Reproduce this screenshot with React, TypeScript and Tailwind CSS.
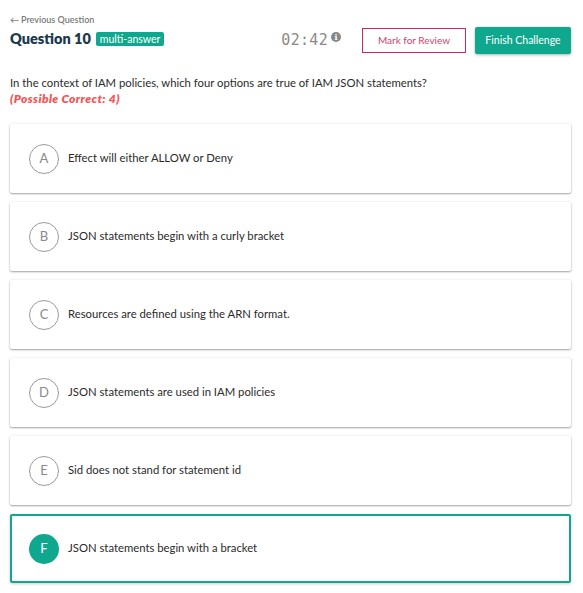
import React, { useState } from 'react';

const options = [
  { id: 'A', text: 'Effect will either ALLOW or Deny' },
  { id: 'B', text: 'JSON statements begin with a curly bracket' },
  { id: 'C', text: 'Resources are defined using the ARN format.' },
  { id: 'D', text: 'JSON statements are used in IAM policies' },
  { id: 'E', text: 'Sid does not stand for statement id' },
  { id: 'F', text: 'JSON statements begin with a bracket' },
];

const App = () => {
  const [selected, setSelected] = useState<string[]>(['F']);

  const toggle = (id: string) =>
    setSelected((s) => (s.includes(id) ? s.filter((x) => x !== id) : [...s, id]));

  return (
    <div className="w-[583px] h-[593px] bg-white pl-[10px] pr-[12px] pt-[14px] font-['Lato',sans-serif] text-[#2b2b2b]">
      {/* header */}
      <div className="flex items-start justify-between">
        <div>
          <div className="flex items-center gap-[2px] text-[9px] font-semibold text-[#7a7a7a] leading-[12px]">
            <span>&larr;</span>
            <span>Previous Question</span>
          </div>
          <div className="flex items-center gap-[5px] mt-[4px]">
            <h1 className="text-[14.5px] font-extrabold text-[#1b3a4b] leading-[18px]">Question 10</h1>
            <span className="bg-[#0fa88e] text-white text-[10.5px] leading-[14px] px-[4px] rounded-[2px]">
              multi-answer
            </span>
          </div>
        </div>
        <div className="flex items-center mt-[13px]">
          <span className="font-['DejaVu_Sans_Mono',monospace] text-[15px] text-[#8a8a8a] tracking-[0.3px]">02:42</span>
          <span className="ml-[3px] -mt-[8px] w-[10px] h-[10px] rounded-full bg-[#888] text-white text-[8px] font-bold leading-[10px] text-center font-['DejaVu_Serif',serif]">
            i
          </span>
          <button className="ml-[21px] w-[104px] h-[25px] border border-[#c02e58] text-[#c8486c] text-[10px] bg-white">
            Mark for Review
          </button>
          <button className="ml-[9px] w-[96px] h-[27px] bg-[#0fa88e] text-white text-[10.5px] rounded-[2px] shadow-[0_1px_3px_rgba(0,0,0,0.3)]">
            Finish Challenge
          </button>
        </div>
      </div>

      {/* question */}
      <p className="mt-[21px] text-[11.3px] leading-[16px] text-[#2b2b2b]">
        In the context of IAM policies, which four options are true of IAM JSON statements?
      </p>
      <p className="text-[12px] tracking-[0.4px] leading-[16px] font-extrabold italic text-[#f25656]">
        (Possible Correct: 4)
      </p>

      {/* options */}
      <div className="mt-[17px] flex flex-col gap-[9px]">
        {options.map((o) => {
          const on = selected.includes(o.id);
          return (
            <button
              key={o.id}
              onClick={() => toggle(o.id)}
              className={`h-[69px] w-full flex items-center text-left bg-white rounded-[2px] ${
                on
                  ? 'border-2 border-[#0fa88e] pl-[17px] shadow-[0_1px_3px_rgba(0,0,0,0.2)]'
                  : 'pl-[19px] shadow-[0_1px_2px_rgba(0,0,0,0.35),0_0_3px_rgba(0,0,0,0.08)]'
              }`}
            >
              <span
                className={`w-[30px] h-[30px] rounded-full flex items-center justify-center text-[13px] ${
                  on ? 'bg-[#0fa88e] text-white' : 'border border-[#9a9a9a] text-[#8a8a8a]'
                }`}
              >
                {o.id}
              </span>
              <span className="ml-[9px] text-[11.3px] text-[#2b2b2b]">{o.text}</span>
            </button>
          );
        })}
      </div>
    </div>
  );
};

export default App;
